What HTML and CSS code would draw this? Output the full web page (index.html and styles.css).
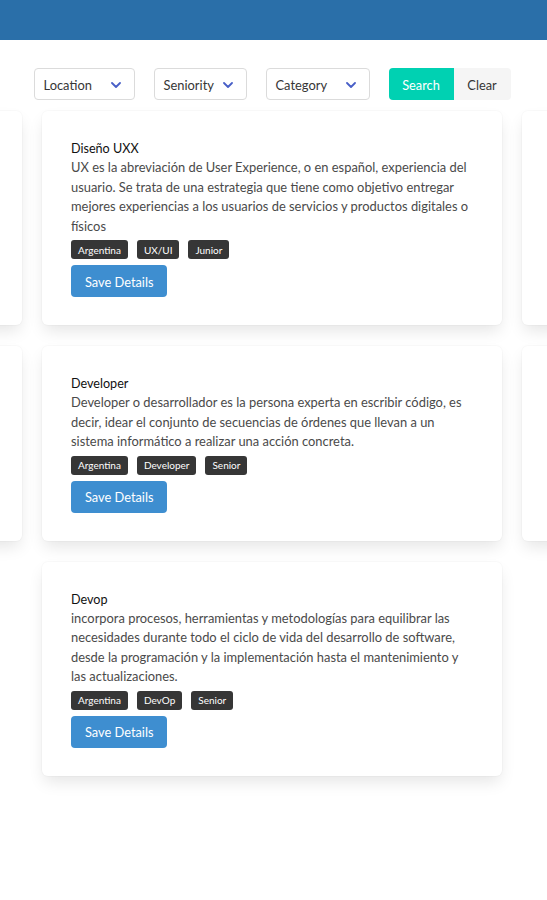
FILE: index.html
```html
<!DOCTYPE html>
<html lang="es">
<head>
<meta charset="utf-8">
<title>Jobs</title>
<link rel="stylesheet" href="styles.css">
</head>
<body>
<header class="topbar"></header>

<section class="filters">
  <div class="select select-location"><span>Location</span><svg class="chev" width="10" height="6" viewBox="0 0 10 6"><polyline points="1,1 5,5 9,1" /></svg></div>
  <div class="select select-seniority"><span>Seniority</span><svg class="chev" width="10" height="6" viewBox="0 0 10 6"><polyline points="1,1 5,5 9,1" /></svg></div>
  <div class="select select-category"><span>Category</span><svg class="chev" width="10" height="6" viewBox="0 0 10 6"><polyline points="1,1 5,5 9,1" /></svg></div>
  <div class="btn-group">
    <button class="btn btn-search">Search</button>
    <button class="btn btn-clear">Clear</button>
  </div>
</section>

<main class="rows">
  <div class="row">
    <div class="card card-side"></div>
    <article class="card">
      <h3 class="card-title">Diseño UXX</h3>
      <p class="card-text">UX es la abreviación de User Experience, o en español, experiencia del usuario. Se trata de una estrategia que tiene como objetivo entregar mejores experiencias a los usuarios de servicios y productos digitales o físicos</p>
      <div class="tags"><span class="tag">Argentina</span><span class="tag">UX/UI</span><span class="tag">Junior</span></div>
      <button class="btn-save">Save Details</button>
    </article>
    <div class="card card-side"></div>
  </div>

  <div class="row">
    <div class="card card-side"></div>
    <article class="card">
      <h3 class="card-title">Developer</h3>
      <p class="card-text">Developer o desarrollador es la persona experta en escribir código, es decir, idear el conjunto de secuencias de órdenes que llevan a un sistema informático a realizar una acción concreta.</p>
      <div class="tags"><span class="tag">Argentina</span><span class="tag">Developer</span><span class="tag">Senior</span></div>
      <button class="btn-save">Save Details</button>
    </article>
    <div class="card card-side"></div>
  </div>

  <div class="row">
    <article class="card">
      <h3 class="card-title">Devop</h3>
      <p class="card-text">incorpora procesos, herramientas y metodologías para equilibrar las necesidades durante todo el ciclo de vida del desarrollo de software, desde la programación y la implementación hasta el mantenimiento y las actualizaciones.</p>
      <div class="tags"><span class="tag">Argentina</span><span class="tag">DevOp</span><span class="tag">Senior</span></div>
      <button class="btn-save">Save Details</button>
    </article>
  </div>
</main>
</body>
</html>
```

FILE: styles.css
```css
* { box-sizing: border-box; }

html, body {
  margin: 0;
  padding: 0;
  background: #fff;
  overflow-x: hidden;
}

body {
  font-family: "Lato", "Noto Sans", sans-serif;
  font-size: 12.9px;
  color: #4a4a4a;
}

.topbar {
  height: 40px;
  background: #2a6fa9;
}

.filters {
  display: flex;
  justify-content: center;
  align-items: center;
  gap: 19px;
  margin-top: 28px;
  height: 32px;
  padding-right: 3px;
}

.select {
  height: 32px;
  border: 1px solid #dbdbdb;
  border-radius: 4px;
  display: flex;
  align-items: center;
  justify-content: space-between;
  padding: 1px 13px 0 9px;
  color: #363636;
  font-size: 12.9px;
  background: #fff;
}

.select-location { width: 101px; }
.select-seniority { width: 93px; }
.select-category { width: 104px; }

.chev {
  display: block;
  flex: none;
}
.chev polyline {
  fill: none;
  stroke: #485fc7;
  stroke-width: 1.8;
  stroke-linecap: round;
  stroke-linejoin: round;
}

.btn-group {
  display: flex;
}

.btn {
  height: 32px;
  border: 0;
  font-family: inherit;
  font-size: 12.8px;
  padding: 1px 0 0;
  cursor: pointer;
}

.btn-search {
  width: 65px;
  background: #00d1b2;
  color: #fff;
  border-radius: 4px 0 0 4px;
}

.btn-clear {
  width: 57px;
  background: #f5f5f5;
  color: #363636;
  border-radius: 0 4px 4px 0;
}

.rows {
  display: flex;
  flex-direction: column;
  gap: 21px;
  margin-top: 11px;
  padding-bottom: 40px;
}

.row {
  display: flex;
  justify-content: center;
  gap: 20px;
  padding-right: 3px;
}

.card {
  flex: 0 0 460px;
  background: #fff;
  border-radius: 6px;
  box-shadow: 0 8px 16px -2px rgba(10, 10, 10, 0.1), 0 0 0 1px rgba(10, 10, 10, 0.02);
  padding: 28px 29px 28px;
}

.card-title {
  margin: 0;
  font-size: 12.6px;
  font-weight: 400;
  line-height: 19.4px;
  color: #111;
}

.card-text {
  margin: 0;
  line-height: 19.4px;
  color: #4a4a4a;
}

.tags {
  display: flex;
  gap: 9px;
  margin-top: 4px;
}

.tag {
  height: 19px;
  display: inline-flex;
  align-items: center;
  padding: 0 7px;
  background: #363636;
  color: #fff;
  font-size: 10px;
  border-radius: 3px;
}

.btn-save {
  display: block;
  margin-top: 6px;
  height: 32px;
  padding: 1px 14px 0;
  border: 0;
  border-radius: 4px;
  background: #3e8ed0;
  color: #fff;
  font-family: inherit;
  font-size: 12.8px;
  cursor: pointer;
}
```
